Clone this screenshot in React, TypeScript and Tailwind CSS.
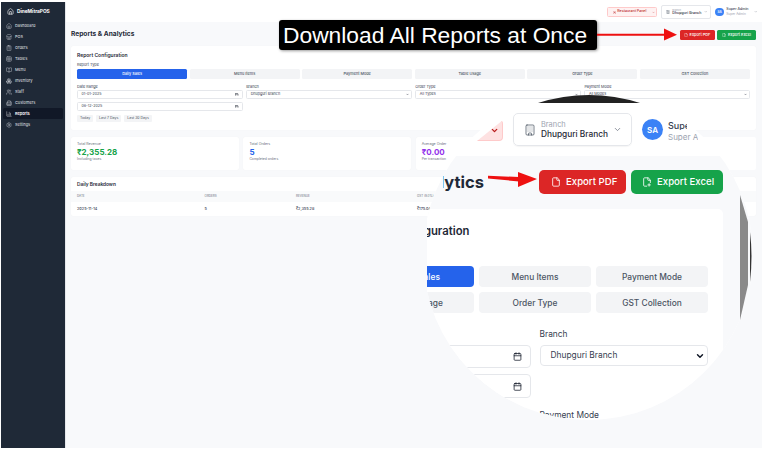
import React from "react";
import {
  Home, Store, ClipboardList, Table, BookOpen, Boxes, Users, Building2, BarChart3, Settings,
  File, FilePlus2, Building, ChevronDown, Calendar, UtensilsCrossed,
} from "lucide-react";

const nav = [
  { label: "Dashboard", Icon: Home },
  { label: "POS", Icon: Store },
  { label: "Orders", Icon: ClipboardList },
  { label: "Tables", Icon: Table },
  { label: "Menu", Icon: BookOpen },
  { label: "Inventory", Icon: Boxes },
  { label: "Staff", Icon: Users },
  { label: "Customers", Icon: Building2 },
  { label: "Reports", Icon: BarChart3, active: true },
  { label: "Settings", Icon: Settings },
];

const tabs = ["Daily Sales", "Menu Items", "Payment Mode", "Table Usage", "Order Type", "GST Collection"];

function Sidebar() {
  return (
    <aside className="w-[64px] shrink-0 bg-[#1f2937] text-white">
      <div className="flex h-[18px] items-center gap-[3px] pl-[6px] pt-[1px]">
        <Home size={7} strokeWidth={2} />
        <span className="text-[4.8px] font-bold">DineMitraPOS</span>
      </div>
      <nav className="flex flex-col px-[2px]">
        {nav.map(({ label, Icon, active }) => (
          <div
            key={label}
            className={
              active
                ? "flex h-[11px] items-center gap-[3px] rounded-[1.5px] bg-[#111827] pl-[3px] text-[3.9px] font-semibold text-white"
                : "flex h-[11px] items-center gap-[3px] pl-[3px] text-[3.9px] font-medium text-[#d1d5db]"
            }
          >
            <Icon size={6} strokeWidth={1.6} />
            <span>{label}</span>
          </div>
        ))}
      </nav>
    </aside>
  );
}

function Header() {
  return (
    <header className="flex h-[20px] shrink-0 items-center justify-end bg-white pr-[5px]">
      <div className="flex h-[10px] w-[50px] items-center gap-[1px] rounded-[1.5px] border-[0.5px] border-[#fecaca] bg-[#fef2f2] pl-[5px] text-[3.6px] font-medium text-[#b91c1c]">
        <UtensilsCrossed size={3} />
        <span>Restaurant Panel</span>
        <ChevronDown size={3} className="ml-auto mr-[1px]" />
      </div>
      <div className="ml-[4px] flex h-[14px] w-[50px] items-center gap-[2px] rounded-[2px] border-[0.5px] border-[#e5e7eb] pl-[4px]">
        <Building size={4} className="text-[#6b7280]" />
        <div className="leading-none">
          <div className="text-[2.6px] text-[#9ca3af]">Branch</div>
          <div className="mt-[0.5px] text-[3.6px] font-medium text-[#1f2937]">Dhupguri Branch</div>
        </div>
        <ChevronDown size={3.5} className="ml-auto mr-[3px] text-[#6b7280]" />
      </div>
      <div className="ml-[4px] flex size-[8.5px] items-center justify-center rounded-full bg-[#3b82f6] text-[3.2px] font-semibold text-white">SA</div>
      <div className="ml-[2.5px] leading-none">
        <div className="text-[3.6px] font-medium text-[#374151]">Super Admin</div>
        <div className="mt-[1px] text-[3.2px] text-[#9ca3af]">Super Admin</div>
      </div>
      <ChevronDown size={3.5} className="ml-[5px] text-[#6b7280]" />
    </header>
  );
}

function Stat({ label, value, hint, color }: { label: string; value: string; hint: string; color: string }) {
  return (
    <div className="h-[33px] rounded-[2px] bg-white pl-[6px] pt-[5.5px] leading-none shadow-[0_0_1px_rgba(0,0,0,0.06)]">
      <div className="text-[3.6px] text-[#6b7280]">{label}</div>
      <div className={`mt-[1.5px] text-[8px] font-bold ${color}`}>{value}</div>
      <div className="mt-[2px] text-[3.4px] text-[#6b7280]">{hint}</div>
    </div>
  );
}

function BaseField({ label, value, caret }: { label: string; value: string; caret?: boolean }) {
  return (
    <div>
      <div className="h-[7px] text-[3.8px] leading-[7px] text-[#374151]">{label}</div>
      <div className="flex h-[9.5px] items-center justify-between rounded-[1.5px] border-[0.5px] border-[#e5e7eb] bg-white pl-[3.5px] pr-[2px] text-[3.7px] text-[#374151]">
        <span>{value}</span>
        {caret && <ChevronDown size={3} strokeWidth={3} className="text-[#111827]" />}
      </div>
    </div>
  );
}

function BaseDate({ value }: { value: string }) {
  return (
    <div className="flex h-[9.5px] items-center justify-between rounded-[1.5px] border-[0.5px] border-[#e5e7eb] bg-white pl-[3.5px] pr-[3px] text-[3.7px] text-[#374151]">
      <span>{value}</span>
      <Calendar size={3.5} className="text-[#111827]" />
    </div>
  );
}

function Main() {
  return (
    <main className="flex-1 bg-[#f8f9fb] pl-[5px] pr-[6px]">
      <div className="flex h-[24px] items-center justify-between pt-[1px]">
        <h1 className="text-[6.6px] font-bold text-[#1f2937]">Reports &amp; Analytics</h1>
        <div className="flex items-center gap-[2.5px]">
          <button className="flex h-[10px] w-[35px] items-center justify-center gap-[2px] rounded-[1.5px] bg-[#dc2626] text-[3.9px] font-medium text-white">
            <File size={4} /> Export PDF
          </button>
          <button className="flex h-[10px] w-[39px] items-center justify-center gap-[2px] rounded-[1.5px] bg-[#16a34a] text-[3.9px] font-medium text-white">
            <FilePlus2 size={4} /> Export Excel
          </button>
        </div>
      </div>

      <section className="h-[84px] rounded-[2px] bg-white px-[6px] pt-[6px] shadow-[0_0_1px_rgba(0,0,0,0.06)]">
        <h2 className="text-[5px] font-semibold leading-[6px] text-[#1f2937]">Report Configuration</h2>
        <div className="mt-[2px] h-[9px] text-[3.8px] leading-[9px] text-[#374151]">Report Type</div>
        <div className="grid grid-cols-6 gap-[2.4px]">
          {tabs.map((t, i) => (
            <div
              key={t}
              className={
                i === 0
                  ? "flex h-[9.5px] items-center justify-center rounded-[1.5px] bg-[#2563eb] text-[3.8px] font-medium text-white"
                  : "flex h-[9.5px] items-center justify-center rounded-[1.5px] bg-[#f3f4f6] text-[3.8px] font-medium text-[#4b5563]"
              }
            >
              {t}
            </div>
          ))}
        </div>
        <div className="mt-[4px] grid grid-cols-4 gap-[3.5px]">
          <div>
            <div className="h-[7px] text-[3.8px] leading-[7px] text-[#374151]">Date Range</div>
            <BaseDate value="01-01-2025" />
            <div className="mt-[2.5px]">
              <BaseDate value="06-12-2025" />
            </div>
          </div>
          <BaseField label="Branch" value="Dhupguri Branch" caret />
          <BaseField label="Order Type" value="All Types" caret />
          <BaseField label="Payment Mode" value="All Modes" caret />
        </div>
        <div className="mt-[4px] flex gap-[3px]">
          {["Today", "Last 7 Days", "Last 30 Days"].map((t) => (
            <div key={t} className="flex h-[7px] items-center rounded-[1px] bg-[#f3f4f6] px-[3px] text-[3.5px] text-[#4b5563]">{t}</div>
          ))}
        </div>
      </section>

      <div className="mt-[7px] grid grid-cols-4 gap-[4.5px]">
        <Stat label="Total Revenue" value="₹2,355.28" hint="Including taxes" color="text-[#16a34a]" />
        <Stat label="Total Orders" value="5" hint="Completed orders" color="text-[#2563eb]" />
        <Stat label="Average Order" value="₹0.00" hint="Per transaction" color="text-[#9333ea]" />
        <div className="h-[33px] rounded-[2px] bg-white" />
      </div>

      <section className="mt-[7px] h-[39px] rounded-[2px] bg-white shadow-[0_0_1px_rgba(0,0,0,0.06)]">
        <h2 className="h-[14px] pl-[6px] text-[4.8px] font-semibold leading-[14px] text-[#1f2937]">Daily Breakdown</h2>
        <div className="grid h-[11px] grid-cols-[133.6px_91.4px_121px_1fr] items-center bg-[#f9fafb] text-[3px] text-[#6b7280]">
          <span className="pl-[6px]">DATE</span>
          <span>ORDERS</span>
          <span>REVENUE</span>
          <span>GST (9.0%)</span>
        </div>
        <div className="grid h-[14px] grid-cols-[133.6px_91.4px_121px_1fr] items-center text-[3.8px] font-medium text-[#374151]">
          <span className="pl-[6px]">2025-11-14</span>
          <span>5</span>
          <span>₹2,355.28</span>
          <span>₹175.04</span>
        </div>
      </section>
    </main>
  );
}

function Magnifier() {
  return (
    <div className="absolute left-[423px] top-[90px] size-[330px] overflow-hidden rounded-full bg-white [clip-path:inset(13px_0_0_4px)] [font-family:Inter,sans-serif]">
      <div className="flex h-[66px] items-start gap-[10px] pl-[17px] pt-[23px]">
        <div className="mt-[7px] flex h-[21px] w-[63px] shrink-0 items-center justify-end rounded-[4px] border-b border-r border-[#fecaca] bg-[#fee2e2] pr-[3px] text-[#b91c1c] [clip-path:polygon(37px_21px,63px_0,63px_21px)]">
          <ChevronDown size={9} strokeWidth={3.5} />
        </div>
        <div className="flex h-[33px] w-[119px] shrink-0 items-center rounded-[5px] border border-[#e5e7eb] pl-[10px] shadow-[0_1px_1px_rgba(0,0,0,0.04)]">
          <Building size={12} strokeWidth={1.5} className="text-[#4b5563]" />
          <div className="ml-[5px] leading-none">
            <div className="text-[7.4px] text-[#9ca3af]">Branch</div>
            <div className="mt-[2px] whitespace-nowrap text-[8.3px] font-medium text-[#1f2937]">Dhupguri Branch</div>
          </div>
          <ChevronDown size={9} className="ml-[5px] text-[#6b7280]" />
        </div>
        <div className="mt-[6px] flex size-[21px] shrink-0 items-center justify-center rounded-full bg-[#3b82f6] text-[8px] font-semibold text-white">SA</div>
        <div className="-ml-[5px] mt-[8px] whitespace-nowrap leading-none">
          <div className="w-[19px] overflow-hidden text-[9px] font-medium text-[#374151]">Super Admin</div>
          <div className="mt-[3px] w-[30px] overflow-hidden text-[8px] text-[#9ca3af]">Super Admin</div>
        </div>
      </div>

      <div className="h-[264px] bg-[#f8f9fb] pt-[14px]">
        <div className="ml-[-76px] w-[376px]">
          <div className="flex h-[24px] items-center justify-end gap-[5px]">
            <h1 className="mr-[50px] shrink-0 whitespace-nowrap text-[16.5px] font-bold text-[#1f2937] [clip-path:inset(0_0_0_calc(100%-41px))]">Reports &amp; Analytics</h1>
            <button className="flex h-[24px] w-[87px] shrink-0 items-center gap-[5px] rounded-[5px] bg-[#dc2626] pl-[12px] text-[9.6px] font-medium text-white">
              <File size={10} /> Export PDF
            </button>
            <button className="flex h-[24px] w-[92px] shrink-0 items-center gap-[5px] rounded-[5px] bg-[#16a34a] pl-[11px] text-[9.6px] font-medium text-white">
              <FilePlus2 size={10} /> Export Excel
            </button>
          </div>

          <section className="mt-[15px] h-[240px] rounded-[5px] bg-white px-[15px] pt-[14px]">
            <h2 className="-ml-[7px] h-[16px] whitespace-nowrap text-[11.3px] font-semibold leading-[16px] text-[#1f2937]">Report Configuration</h2>
            <div className="h-[27px] pt-[12px] text-[8.4px] leading-[12px] text-[#374151]">Report Type</div>
            <div className="grid grid-cols-3 gap-[5px]">
              {tabs.map((t, i) => (
                <div
                  key={t}
                  className={
                    i === 0
                      ? "flex h-[21px] items-center justify-center rounded-[4px] bg-[#2563eb] pt-[1px] text-[8.4px] font-medium text-white"
                      : "flex h-[21px] items-center justify-center rounded-[4px] bg-[#f3f4f6] pt-[1px] text-[8.4px] font-medium text-[#4b5563]"
                  }
                >
                  {t}
                </div>
              ))}
            </div>
            <div className="mt-[15px] grid grid-cols-2 gap-x-[9px]">
              <div>
                <div className="h-[17px] text-[8.4px] leading-[12px] text-[#374151]">Date Range</div>
                <div className="flex h-[23px] items-center justify-between rounded-[4px] border border-[#e5e7eb] bg-white pl-[10px] pr-[8px] text-[8.4px] text-[#374151]">
                  <span>01-01-2025</span>
                  <Calendar size={9} strokeWidth={2} className="text-[#111827]" />
                </div>
                <div className="mt-[6px] flex h-[24px] items-center justify-between rounded-[4px] border border-[#e5e7eb] bg-white pl-[10px] pr-[8px] text-[8.4px] text-[#374151]">
                  <span>06-12-2025</span>
                  <Calendar size={9} strokeWidth={2} className="text-[#111827]" />
                </div>
              </div>
              <div>
                <div className="h-[17px] text-[8.4px] leading-[12px] text-[#374151]">Branch</div>
                <div className="flex h-[21px] items-center justify-between rounded-[4px] border border-[#e5e7eb] bg-white pl-[10px] pr-[2px] text-[8.4px] text-[#374151]">
                  <span>Dhupguri Branch</span>
                  <ChevronDown size={10} strokeWidth={3.5} className="text-[#111827]" />
                </div>
                <div className="mt-[43px] h-[12px] text-[8.4px] leading-[12px] text-[#374151]">Payment Mode</div>
              </div>
            </div>
          </section>
        </div>
      </div>
    </div>
  );
}

function Drawings() {
  return (
    <svg className="pointer-events-none absolute left-0 top-0" width="762" height="452" viewBox="0 0 762 452">
      <path d="M538 103 Q589 87 640 103 Z" fill="#222" />
      <path d="M740 195 L748 222 L748 285 L740 320 Z" fill="#8a8a8a" />
      <path d="M750 232 Q753 256 750 282 Z" fill="#333" />
      <path d="M597 33.7 L665 33.7 L665 35.7 L597 35.7 Z" fill="#ee1111" />
      <path d="M664 28.5 L677 34.7 L664 40.5 Z" fill="#ee1111" />
      <path d="M488 175.8 L519 177 L519 181.5 L488 178.4 Z" fill="#ee1111" />
      <path d="M518 172 L537 179 L518 187 Z" fill="#ee1111" />
    </svg>
  );
}

export default function App() {
  return (
    <div className="relative h-[452px] w-[762px] overflow-hidden bg-white pb-[4px] pl-[1px] pt-[2px] [font-family:Inter,sans-serif]">
      <div className="flex h-full">
        <Sidebar />
        <div className="flex min-w-0 flex-1 flex-col border-l border-[#e5e7eb]">
          <Header />
          <Main />
        </div>
      </div>

      <Magnifier />

      <div className="absolute left-[279px] top-[20px] flex h-[30px] w-[318px] items-center whitespace-nowrap rounded-[3px] bg-black pl-[4px] text-[22.8px] text-white shadow-[1px_1px_3px_rgba(0,0,0,0.4)] [font-family:'Liberation_Sans',Arial,sans-serif]">
        Download All Reports at Once
      </div>

      <Drawings />
    </div>
  );
}
